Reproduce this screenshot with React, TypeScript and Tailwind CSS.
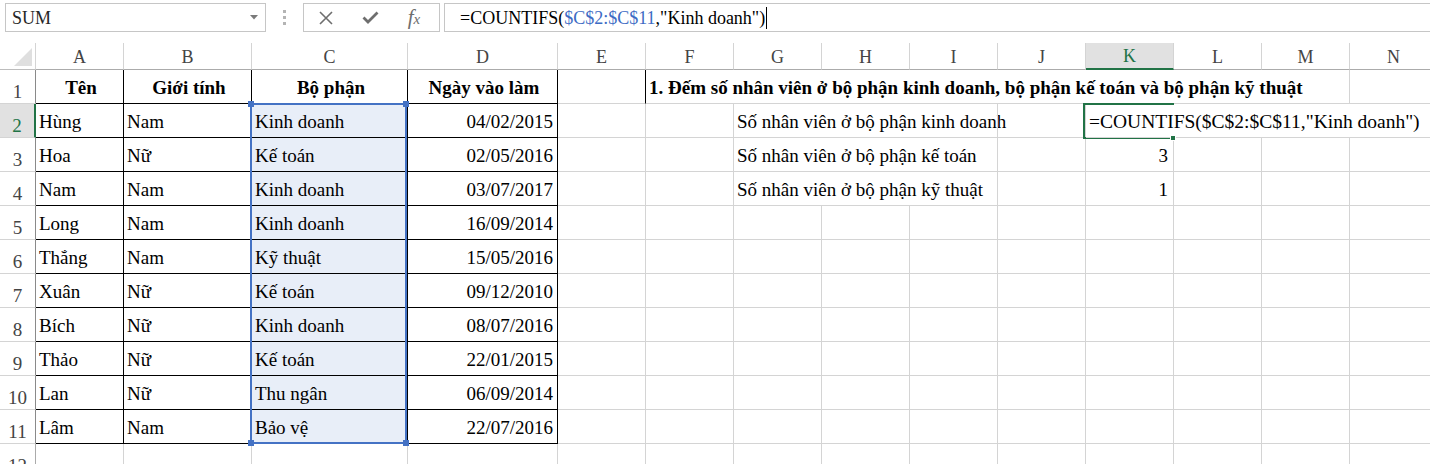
import clsx from "clsx";
import type { ReactNode } from "react";

type Line = "g" | "k" | "n";

const RIGHT: Record<Line, string> = {
  g: "border-r border-r-[#d4d4d4]",
  k: "border-r border-r-black",
  n: "",
};
const BOTTOM: Record<Line, string> = {
  g: "border-b border-b-[#d4d4d4]",
  k: "border-b border-b-black",
  n: "",
};

const COLS = ["A", "B", "C", "D", "E", "F", "G", "H", "I", "J", "K", "L", "M", "N"];

const staff = [
  ["Hùng", "Nam", "Kinh doanh", "04/02/2015"],
  ["Hoa", "Nữ", "Kế toán", "02/05/2016"],
  ["Nam", "Nam", "Kinh doanh", "03/07/2017"],
  ["Long", "Nam", "Kinh doanh", "16/09/2014"],
  ["Thắng", "Nam", "Kỹ thuật", "15/05/2016"],
  ["Xuân", "Nữ", "Kế toán", "09/12/2010"],
  ["Bích", "Nữ", "Kinh doanh", "08/07/2016"],
  ["Thảo", "Nữ", "Kế toán", "22/01/2015"],
  ["Lan", "Nữ", "Thu ngân", "06/09/2014"],
  ["Lâm", "Nam", "Bảo vệ", "22/07/2016"],
];

const counts: Record<number, [string, string]> = {
  3: ["Số nhân viên ở bộ phận kế toán", "3"],
  4: ["Số nhân viên ở bộ phận kỹ thuật", "1"],
};

function Cell({
  r = "g",
  b = "g",
  className,
  children,
}: {
  r?: Line;
  b?: Line;
  className?: string;
  children?: ReactNode;
}) {
  return (
    <div
      className={clsx(
        "flex items-end whitespace-nowrap pb-[5px] pl-[3px] leading-[21px]",
        RIGHT[r],
        BOTTOM[b],
        className
      )}
    >
      {children}
    </div>
  );
}

function RowHead({ n, active, dark }: { n: number; active?: boolean; dark?: boolean }) {
  return (
    <div
      className={clsx(
        "flex items-end justify-center border-b border-b-[#d4d4d4] pb-[1px] leading-[21px]",
        active
          ? "border-r-2 border-r-[#217346] bg-[#e1e1e1] text-[#217346]"
          : dark
            ? "border-r border-r-[#8a8a8a] text-[#444]"
            : "border-r border-r-[#ababab] text-[#444]"
      )}
    >
      {n}
    </div>
  );
}

function RightCells({ row }: { row: number }) {
  if (row === 1) {
    return (
      <>
        <Cell r="k" />
        <Cell r="n" className="pl-[2px] font-bold">
          1. Đếm số nhân viên ở bộ phận kinh doanh, bộ phận kế toán và bộ phận kỹ thuật
        </Cell>
        <Cell r="n" />
        <Cell r="n" />
        <Cell r="n" />
        <Cell r="n" />
        <Cell r="n" />
        <Cell r="n" />
        <Cell />
        <Cell />
      </>
    );
  }
  if (row === 2) {
    return (
      <>
        <Cell />
        <Cell />
        <Cell r="n" className="pl-[1px]">
          Số nhân viên ở bộ phận kinh doanh
        </Cell>
        <Cell r="n" />
        <Cell />
        <Cell />
        <Cell r="n" className="relative z-10 pl-[1px] text-[19.5px]">
          =COUNTIFS($C$2:$C$11,"Kinh doanh")
        </Cell>
        <Cell r="n" />
        <Cell r="n" />
        <Cell />
      </>
    );
  }
  const c = counts[row];
  if (c) {
    return (
      <>
        <Cell />
        <Cell />
        <Cell r="n" className="pl-[1px]">
          {c[0]}
        </Cell>
        <Cell r="n" />
        <Cell />
        <Cell />
        <Cell className="justify-end pr-[5px]">{c[1]}</Cell>
        <Cell />
        <Cell />
        <Cell />
      </>
    );
  }
  return (
    <>
      {COLS.slice(4).map((col) => (
        <Cell key={col} />
      ))}
    </>
  );
}

function Toolbar() {
  return (
    <div className="flex h-[43px] items-start pl-[5px] pt-[3px]">
      <div className="flex h-[29px] w-[261px] items-center justify-between border border-[#c6c6c6] pl-[6px] pr-[7px]">
        <span className="text-[18px] leading-none text-[#262626]">SUM</span>
        <svg width="8" height="5" viewBox="0 0 8 5">
          <polygon points="0,0 8,0 4,4.5" fill="#7a7a7a" />
        </svg>
      </div>
      <div className="flex h-[29px] w-[37px] flex-col items-center justify-center gap-[3px]">
        <span className="size-[3px] bg-[#b4b4b4]" />
        <span className="size-[3px] bg-[#b4b4b4]" />
        <span className="size-[3px] bg-[#b4b4b4]" />
      </div>
      <div className="flex h-[29px] w-[137px] items-center border border-[#c6c6c6]">
        <div className="flex w-[44px] justify-center">
          <svg width="14" height="14" viewBox="0 0 14 14">
            <path d="M1 1 13 13M13 1 1 13" stroke="#6e6e6e" strokeWidth="1.6" />
          </svg>
        </div>
        <div className="flex w-[44px] justify-center">
          <svg width="17" height="13" viewBox="0 0 17 13">
            <path d="M1.5 6.5 6 11 15.5 1.5" fill="none" stroke="#6e6e6e" strokeWidth="2.8" />
          </svg>
        </div>
        <div className="flex w-[44px] items-baseline justify-center italic text-[#6e6e6e]">
          <span className="text-[21px] leading-none">f</span>
          <span className="text-[15px] leading-none">x</span>
        </div>
      </div>
      <div className="ml-[4px] flex h-[29px] flex-1 items-center border border-r-0 border-[#c6c6c6] pl-[15px] text-[18px] leading-none">
        <span>=COUNTIFS(</span>
        <span className="text-[#3c6bc4]">$C$2:$C$11</span>
        <span>,"Kinh doanh")</span>
        <span className="ml-[1px] inline-block h-[22px] w-px bg-black" />
      </div>
    </div>
  );
}

export default function App() {
  return (
    <div className="h-[464px] w-[1430px] overflow-hidden bg-white font-['Liberation_Serif',serif] text-[19px] text-black">
      <Toolbar />
      <div className="relative">
        <div className="grid grid-cols-[36px_88px_128px_156px_150px_88px_88px_88px_88px_88px_88px_88px_88px_88px_88px] grid-rows-[27px_34px_34px_34px_34px_34px_34px_34px_34px_34px_34px_34px_34px]">
          {/* column headers */}
          <div className="flex items-end justify-end border-b border-r border-b-[#bdbdbd] border-r-[#d4d4d4] pb-[3px] pr-[3px]">
            <svg width="18" height="18" viewBox="0 0 18 18">
              <polygon points="18,0 18,18 0,18" fill="#dfdfdf" />
            </svg>
          </div>
          {COLS.map((col) => (
            <div
              key={col}
              className={clsx(
                "flex items-center justify-center pt-[2px] text-[18px] leading-[21px]",
                col === "K"
                  ? "border-b-2 border-r border-b-[#217346] border-r-[#d4d4d4] bg-[#e1e1e1] text-[#217346]"
                  : "border-b border-r border-b-[#ababab] border-r-[#d4d4d4] text-[#444]"
              )}
            >
              {col}
            </div>
          ))}

          {/* row 1: headings */}
          <RowHead n={1} dark />
          {["Tên", "Giới tính", "Bộ phận", "Ngày vào làm"].map((h) => (
            <Cell key={h} r="k" b="k" className="justify-center pl-0 font-bold">
              {h}
            </Cell>
          ))}
          <RightCells row={1} />

          {/* rows 2–11: staff list */}
          {staff.map((s, i) => {
            const row = i + 2;
            return (
              <div key={row} className="contents">
                <RowHead n={row} active={row === 2} dark />
                <Cell r="k" b="k">{s[0]}</Cell>
                <Cell r="k" b="k">{s[1]}</Cell>
                <Cell r="k" b="k" className="bg-[#e8eef8]">{s[2]}</Cell>
                <Cell r="k" b="k" className="justify-end pr-[4px]">{s[3]}</Cell>
                <RightCells row={row} />
              </div>
            );
          })}

          {/* row 12 */}
          <RowHead n={12} />
          {COLS.map((col) => (
            <Cell key={col} />
          ))}
        </div>

        {/* referenced range C2:C11 */}
        <div className="pointer-events-none absolute left-[250px] top-[60px] h-[341px] w-[157px] border-2 border-[#4472c4]">
          <span className="absolute -left-[4px] -top-[4px] size-[6px] bg-[#4472c4]" />
          <span className="absolute -right-[4px] -top-[4px] size-[6px] bg-[#4472c4]" />
          <span className="absolute -bottom-[4px] -left-[4px] size-[6px] bg-[#4472c4]" />
          <span className="absolute -bottom-[4px] -right-[4px] size-[6px] bg-[#4472c4]" />
        </div>

        {/* active cell K2: the text runs over its right edge */}
        <div className="pointer-events-none absolute left-[1083px] top-[60px] h-[36px] w-[91px] border-2 border-r-0 border-[#217346]">
          <span className="absolute -bottom-[4px] -right-[2px] z-20 size-[6px] border border-white bg-[#217346]" />
        </div>
      </div>
    </div>
  );
}
